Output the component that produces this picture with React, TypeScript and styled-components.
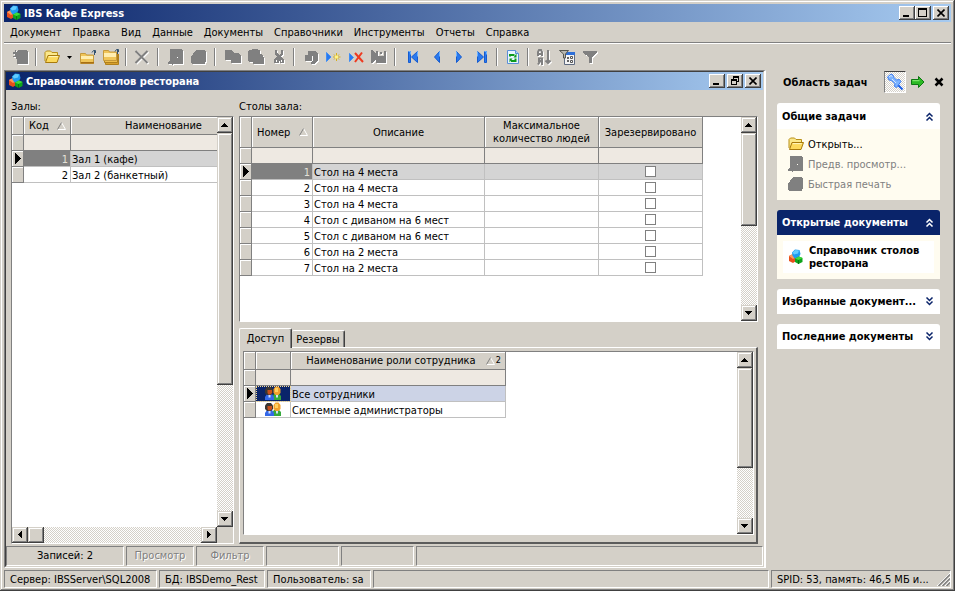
import React from 'react';
import styled, { createGlobalStyle, css } from 'styled-components';

const FACE = '#d4d0c8';
const SHADOW = '#808080';
const DARK = '#404040';
const NAVY = '#0a246a';

const Global = createGlobalStyle`
  * { box-sizing: border-box; }
  html, body { margin: 0; padding: 0; background: ${FACE}; }
  body, button, input, table {
    font-family: "DejaVu Sans Condensed", "DejaVu Sans", sans-serif;
    font-size: 11px;
    line-height: 13px;
    color: #000;
  }
  button { border: 0; padding: 0; margin: 0; background: none; }
  svg { display: block; flex: none; }
`;

/* ---------- window frame ---------- */

const raised = css`
  background: ${FACE};
  box-shadow: inset -1px -1px ${DARK}, inset 1px 1px ${FACE}, inset -2px -2px ${SHADOW}, inset 2px 2px #fff;
`;

const Window = styled.div`
  display: flex;
  flex-direction: column;
  width: 100%;
  height: 100vh;
  padding: 4px 4px 3px;
  overflow: hidden;
  ${raised}
`;

const TitleBar = styled.header`
  display: flex;
  align-items: center;
  flex: none;
  height: 18px;
  padding: 0 2px;
  background: linear-gradient(90deg, ${NAVY}, #a6caf0);
  color: #fff;
`;

const TitleText = styled.h1`
  flex: 1;
  margin: 0 0 0 2px;
  font-size: 11px;
  line-height: 13px;
  font-weight: bold;
  white-space: nowrap;
`;

const CaptionButton = styled.button<{ $gap?: boolean }>`
  display: flex;
  align-items: center;
  justify-content: center;
  width: 16px;
  height: 14px;
  margin-left: ${p => (p.$gap ? 2 : 0)}px;
  background: ${FACE};
  box-shadow: inset -1px -1px ${DARK}, inset 1px 1px #fff, inset -2px -2px ${SHADOW};
`;

const MenuBar = styled.nav`
  display: flex;
  align-items: center;
  flex: none;
  height: 22px;
  border-bottom: 1px solid #fff;
  box-shadow: inset 0 -1px ${SHADOW};
`;

const MenuItem = styled.button`
  height: 19px;
  padding: 0 5px 0 6px;
  white-space: nowrap;
`;

const ToolBar = styled.div`
  display: flex;
  align-items: center;
  flex: none;
  height: 26px;
  padding-left: 5px;
`;

const ToolButton = styled.button<{ $narrow?: boolean }>`
  display: flex;
  align-items: center;
  justify-content: center;
  width: ${p => (p.$narrow ? 13 : 23)}px;
  height: 22px;
  &:disabled svg { filter: drop-shadow(1px 1px 0 #fff); }
`;

const ToolSeparator = styled.span<{ $wide?: boolean }>`
  width: 2px;
  height: 18px;
  margin-left: ${p => (p.$wide ? 4 : 3)}px;
  margin-right: ${p => (p.$wide ? 5 : 3)}px;
  border-left: 1px solid ${SHADOW};
  border-right: 1px solid #fff;
`;

const Workspace = styled.div`
  display: flex;
  flex: 1;
  min-height: 0;
`;

/* ---------- child window ---------- */

const ChildFrame = styled.main`
  display: flex;
  flex: 1;
  min-width: 0;
  border-top: 1px solid ${SHADOW};
  border-left: 1px solid ${SHADOW};
  border-right: 2px solid #fff;
  border-bottom: 1px solid #fff;
`;

const ChildWindow = styled.section`
  display: flex;
  flex-direction: column;
  flex: 1;
  min-width: 0;
  border-top: 1px solid ${DARK};
  border-left: 1px solid ${DARK};
  border-right: 1px solid ${FACE};
  border-bottom: 1px solid ${FACE};
`;

const ChildBody = styled.div`
  display: flex;
  flex: 1;
  gap: 5px;
  min-height: 0;
  padding: 0 5px 1px;
`;

const HallColumn = styled.div`
  display: flex;
  flex-direction: column;
  flex: none;
  width: 223px;
`;

const TableColumn = styled.div`
  display: flex;
  flex-direction: column;
  flex: 1;
  min-width: 0;
`;

const Caption = styled.h2`
  flex: none;
  height: 26px;
  margin: 0;
  padding-top: 10px;
  font-size: 11px;
  line-height: 13px;
  font-weight: normal;
`;

/* ---------- grid ---------- */

const GridBox = styled.div<{ $height?: number }>`
  display: flex;
  flex: ${p => (p.$height ? `0 0 ${p.$height}px` : '1')};
  min-height: 0;
  background: #fff;
  border: 1px solid;
  border-color: ${SHADOW} #fff #fff ${SHADOW};
`;

const GridMain = styled.div`
  display: flex;
  flex-direction: column;
  flex: 1;
  min-width: 0;
`;

const GridView = styled.div`
  flex: 1;
  min-height: 0;
  overflow: hidden;
`;

const Table = styled.table<{ $width: number }>`
  width: ${p => p.$width}px;
  table-layout: fixed;
  border-collapse: separate;
  border-spacing: 0;
`;

const Col = styled.col<{ $width: number }>`
  width: ${p => p.$width}px;
`;

const HeadCell = styled.th<{ $height: number }>`
  height: ${p => p.$height}px;
  padding: 0 2px;
  background: ${FACE};
  border-right: 1px solid ${SHADOW};
  border-bottom: 1px solid ${SHADOW};
  box-shadow: inset 1px 1px #fff;
  font-weight: normal;
  text-align: center;
`;

const HeadSort = styled.span`
  display: flex;
  align-items: center;
  justify-content: space-between;
  padding: 0 2px 0 3px;
  white-space: nowrap;
`;

const SortMark = styled.span`
  display: flex;
  align-items: center;
  gap: 1px;
  font-size: 9px;
`;

const FilterCell = styled.td`
  height: 16px;
  padding: 0;
  background: #eee9e2;
  border-right: 1px solid ${SHADOW};
  border-bottom: 1px solid ${SHADOW};
`;

const FilterInput = styled.input`
  display: block;
  width: 100%;
  height: 15px;
  padding: 0 2px;
  border: 0;
  background: transparent;
`;

const Indicator = styled.td`
  height: 16px;
  padding: 0 0 0 3px;
  background: ${FACE};
  border-right: 1px solid ${SHADOW};
  border-bottom: 1px solid ${SHADOW};
  box-shadow: inset 1px 1px #fff;
`;

const Cell = styled.td<{ $align?: string; $tone?: string; $focus?: 'grey' | 'navy'; $plain?: boolean }>`
  height: 16px;
  padding: ${p => (p.$plain ? 0 : 2)}px 2px 0 1px;
  line-height: 13px;
  border-right: 1px solid #c0c0c0;
  border-bottom: 1px solid #c0c0c0;
  text-align: ${p => p.$align || 'left'};
  white-space: nowrap;
  background: ${p => p.$tone || '#fff'};
  ${p => p.$focus === 'grey' && css`background: ${SHADOW}; color: #e4e0d8;`}
  ${p => p.$focus === 'navy' && css`background: ${NAVY}; outline: 1px dotted #f5db95; outline-offset: -1px;`}
  & > svg { margin: 0 auto; }
`;

const Check = styled.input`
  appearance: none;
  display: block;
  width: 11px;
  height: 11px;
  margin: 0 auto;
  background: #fff;
  border: 1px solid ${SHADOW};
`;

/* ---------- scroll bars ---------- */

const Scroll = styled.div<{ $across?: boolean }>`
  display: flex;
  flex: none;
  flex-direction: ${p => (p.$across ? 'row' : 'column')};
  ${p => (p.$across ? 'height: 16px;' : 'width: 16px;')}
  background: repeating-conic-gradient(${FACE} 0 25%, #fff 0 50%) 0 0 / 2px 2px;
  ${p => !p.$across && 'flex: 1;'}
`;

const ScrollSide = styled.div`
  display: flex;
  flex-direction: column;
  flex: none;
  width: 16px;
`;

const ScrollArrow = styled.button`
  display: flex;
  align-items: center;
  justify-content: center;
  flex: none;
  width: 16px;
  height: 16px;
  padding: 0 1px 1px 0;
  ${raised}
`;

const Thumb = styled.div<{ $length: number }>`
  flex: 0 1 ${p => p.$length}px;
  ${raised}
`;

const ScrollGap = styled.div`
  flex: 1;
`;

const Corner = styled.div`
  height: 16px;
  background: ${FACE};
`;

/* ---------- tabs ---------- */

const TabStrip = styled.div`
  display: flex;
  align-items: flex-end;
  flex: none;
  height: 19px;
  margin-top: 6px;
`;

const Tab = styled.button<{ $active?: boolean }>`
  position: relative;
  z-index: ${p => (p.$active ? 1 : 0)};
  width: ${p => (p.$active ? 53 : 53)}px;
  height: ${p => (p.$active ? 20 : 17)}px;
  margin-bottom: ${p => (p.$active ? -1 : 0)}px;
  background: ${FACE};
  border-top: 1px solid #fff;
  border-left: ${p => (p.$active ? '1px solid #fff' : '0')};
  border-right: 1px solid ${DARK};
  border-radius: 2px 2px 0 0;
  box-shadow: inset -1px 0 ${SHADOW};
`;

const TabPage = styled.div`
  display: flex;
  flex: 1;
  min-height: 0;
  padding: 3px 2px 7px 3px;
  border: 1px solid;
  border-color: #fff ${DARK} ${DARK} #fff;
  border-right-width: 2px;
  border-bottom-width: 2px;
  border-right-color: #5c5c5c;
  border-bottom-color: #5c5c5c;
`;

/* ---------- status bars ---------- */

const StatusBar = styled.footer<{ $inner?: boolean }>`
  display: flex;
  flex: none;
  gap: 2px;
  height: ${p => (p.$inner ? 20 : 18)}px;
  margin-top: ${p => (p.$inner ? 1 : 2)}px;
`;

const StatusPanel = styled.div<{ $width?: number; $center?: boolean }>`
  display: flex;
  align-items: center;
  justify-content: ${p => (p.$center ? 'center' : 'space-between')};
  flex: ${p => (p.$width ? `0 0 ${p.$width}px` : '1')};
  min-width: 0;
  padding: ${p => (p.$center ? '0 0 2px' : '0 0 0 5px')};
  overflow: hidden;
  white-space: nowrap;
  border: 1px solid;
  border-color: ${SHADOW} #fff #fff ${SHADOW};
`;

const StatusButton = styled.button`
  &:disabled { color: ${SHADOW}; text-shadow: 1px 1px #fff; }
`;

/* ---------- task pane ---------- */

const TaskPane = styled.aside`
  flex: none;
  width: 185px;
  padding: 1px 11px 0;
`;

const PaneTop = styled.div`
  display: flex;
  align-items: center;
  height: 22px;
  margin-bottom: 10px;
  padding-left: 6px;
`;

const PaneTitle = styled.h2`
  flex: 1;
  margin: 0;
  font-size: 11px;
  line-height: 13px;
  white-space: nowrap;
`;

const PinButton = styled.button`
  display: flex;
  align-items: center;
  justify-content: center;
  width: 22px;
  height: 22px;
  border: 1px solid;
  border-color: ${DARK} #fff #fff ${SHADOW};
  background: repeating-conic-gradient(${FACE} 0 25%, #fff 0 50%) 0 0 / 2px 2px;
`;

const PaneButton = styled.button<{ $close?: boolean }>`
  display: flex;
  width: ${p => (p.$close ? 10 : 16)}px;
  margin-left: ${p => (p.$close ? 8 : 4)}px;
  margin-right: ${p => (p.$close ? -4 : 0)}px;
`;

const Group = styled.section`
  margin-bottom: 10px;
`;

const GroupHead = styled.button<{ $dark?: boolean; $tall?: boolean }>`
  display: flex;
  align-items: center;
  justify-content: space-between;
  width: 100%;
  height: ${p => (p.$tall ? 26 : 25)}px;
  padding: 0 6px 0 5px;
  border-radius: 3px 3px 0 0;
  background: ${p => (p.$dark ? NAVY : '#fff')};
  color: ${p => (p.$dark ? '#fff' : NAVY)};
  white-space: nowrap;
`;

const GroupTitle = styled.span<{ $dark?: boolean }>`
  font-weight: bold;
  color: ${p => (p.$dark ? '#fff' : '#000')};
`;

const TaskList = styled.div`
  padding: 5px 11px 6px;
  background: #fffcf0;
`;

const TaskItem = styled.button`
  display: flex;
  align-items: center;
  gap: 4px;
  width: 100%;
  height: 20px;
  white-space: nowrap;
  &:disabled { color: ${SHADOW}; }
`;

const OpenDocs = styled.div`
  padding: 6px;
  background: #fffcf0;
`;

const OpenDoc = styled.button`
  display: flex;
  align-items: center;
  gap: 5px;
  width: 100%;
  height: 32px;
  padding-left: 5px;
  background: #fff;
  font-weight: bold;
  text-align: left;
  white-space: nowrap;
`;

/* ---------- icons ---------- */

const Logo = () => (
  <svg width="16" height="16" viewBox="0 0 16 16">
    <path d="M1 7l4-2 3 3v4l-3 2-4-2z" fill="#e8501c" />
    <path d="M1 7l4-2 3 3-3 2z" fill="#ff9a5a" />
    <path d="M4 3.500l3-3L11.500 1l1 4-2 4-4 .5-2-3z" fill="#1d9bf0" />
    <path d="M4.500 3.500l3-2.500 3.500.5-1 3-4 1z" fill="#63ccff" />
    <path d="M7 9.500l4-2 3.500 1.500V13l-4 2-3.500-2z" fill="#0ea41c" />
    <path d="M7 9.500l4-2 3.500 1.500-4 2z" fill="#3ddb3c" />
    <path d="M10.500 11v4" stroke="#087512" />
  </svg>
);

const Folder = () => (
  <svg width="16" height="16" viewBox="0 0 16 16">
    <path d="M1 12V3.500L2.500 2h4L8 3.500h5.500V7" fill="#fbe88c" stroke="#b98f16" />
    <path d="M1.500 13.500L4 6.500h11.500L13 13.500z" fill="#fcd95c" stroke="#a87a0c" />
    <path d="M4.800 7.600h9" stroke="#fff6c0" />
  </svg>
);

const FolderUp = () => (
  <svg width="16" height="16" viewBox="0 0 16 16">
    <path d="M.5 14.500V4.500h5l1 1.500h7v8.500z" fill="#f0c558" stroke="#c69a3c" />
    <path d="M1 7h12v3H1z" fill="#ffeeb0" />
    <path d="M1 13h13v1.500H1z" fill="#a86f14" />
    <path d="M14.500 6V2M12 3.500L13.500 1.500H15.500V4" fill="none" stroke="#31506e" />
  </svg>
);

const FoldersUp = () => (
  <svg width="16" height="16" viewBox="0 0 16 16">
    <path d="M2.500 12.500v3h13V5" fill="#d8a02c" stroke="#b0801c" />
    <path d="M1.500 10v3.500h13V4" fill="#edbd4c" stroke="#b0801c" />
    <path d="M.5 11.500v-10h5l1 1.500h7v8.500z" fill="#f0c558" stroke="#c69a3c" />
    <path d="M1 4h12v4H1z" fill="#ffeeb0" />
    <path d="M14.500 5V1M12 2.500L13.500.5H15.500V3" fill="none" stroke="#31506e" />
  </svg>
);

const Grey = ({ d, line }: { d?: string; line?: string }) => (
  <svg width="16" height="16" viewBox="0 0 16 16">
    {d && <path d={d} fill={SHADOW} fillRule="evenodd" shapeRendering="crispEdges" />}
    {line && <path d={line} fill="none" stroke={SHADOW} strokeWidth="2" />}
  </svg>
);

const SHAPES = {
  fresh: 'M5 1h9l1 2v12H4v-5H3V8H0V7h2V5H0V3h2V1h1v2h1z',
  preview: 'M2 0h11l2 2v13H5l-1 1-1-1H0v-2h1l1-2zM9 8v1h1V8z',
  print: 'M5 1h9v1h1v11h-1v2H1l-1-1V8l2-3z',
  copy: 'M0 1h7l2 3h4l3 3v7H6v-3H0z',
  paste: 'M1 1h2l1-1h5l1 1h2v4h2l2 4v6H5v-2H1l-1-1V2z',
  cut: 'M4 1h2v3l2 2 2-2V1h2v4l-2 3 3 2v4H9v-2H8v2H3v-4l3-2-2-3zM5 11v2h1v-2zM10 11v2h1v-2z',
  undo: 'M6 2h8l2 3v6l-4 4H9v-2l2-2V7h-1v5H3V6h3z',
  post: 'M0 1h1l4 4V2h2v5h6V2h2v12H5v-3l-4 3H0zM9 3h2v2H9z',
  funnel: 'M1 2h14v2l-5 4v6H7V8L1 4z',
};

const BlueShape = ({ d }: { d: string }) => (
  <svg width="16" height="16" viewBox="0 0 16 16">
    <path d={d} fill="#2a79ee" stroke="#155bd0" />
    <path d={d} fill="none" stroke="#6cb3ff" strokeDasharray="5 30" />
  </svg>
);

const InsertRow = () => (
  <svg width="16" height="16" viewBox="0 0 16 16">
    <path d="M1.500 3.500v9L6 8z" fill="#2a79ee" stroke="#3f8df5" />
    <path d="M11.500 4v8M8 8h7.500M9 5.500l5 5M14 5.500l-5 5" stroke="#d9b018" />
    <path d="M10 6.500h3v3h-3z" fill="#fff48a" />
  </svg>
);

const DeleteRow = () => (
  <svg width="16" height="16" viewBox="0 0 16 16">
    <path d="M1.500 4.500v8L5.500 8.500z" fill="#2a79ee" stroke="#3f8df5" />
    <path d="M7 4l8 9M14 3.500l-7 9.500" stroke="#ee3a20" strokeWidth="2" />
  </svg>
);

const Refresh = () => (
  <svg width="16" height="16" viewBox="0 0 16 16">
    <path d="M2.500 1.500h8l3 3v10h-11z" fill="#e9f4ff" stroke="#5b8fd6" />
    <path d="M10.500 1.500v3h3" fill="#b6d4f8" stroke="#5b8fd6" />
    <path d="M5 7.500V6h4.500M10.500 9.500V12H6" fill="none" stroke="#0c9a1c" strokeWidth="2" />
    <path d="M8.500 8.500h3v-4zM7.500 9.500h-3v4z" fill="#0c9a1c" />
  </svg>
);

const SortIcon = () => (
  <svg width="16" height="16" viewBox="0 0 16 16" fill="none" stroke={SHADOW} strokeWidth="2">
    <path d="M2 7V3l1-2h2l1 2v4M2 5h4M6 16V9.500H3V12h3M4 12.500L2 15.500" />
    <path d="M12 1v13M9.500 11.500L12 14l2.500-2.500" />
  </svg>
);

const FilterForm = () => (
  <svg width="16" height="16" viewBox="0 0 16 16">
    <path d="M5.500 3.500h10v12h-10z" fill="#f4f4f4" stroke="#5f6b80" />
    <path d="M6 3h10v3H6z" fill="#2d6fd8" />
    <path d="M8 9h2M8 12h2" stroke="#333" strokeWidth="1.500" />
    <path d="M11.500 7.500h2v2h-2zM11.500 11.500h2v2h-2z" fill="#fff" stroke="#555" />
    <path d="M.5 1.500h9L6.500 5v4h-2V5z" fill="#b8b8b0" stroke="#55554f" />
  </svg>
);

const Pin = () => (
  <svg width="18" height="18" viewBox="0 0 18 18">
    <path d="M11 11l5.500 5.500" stroke="#1b5fe8" strokeWidth="2" />
    <path d="M1.500 4L5 1l2 1 .5 2 3 3 3-.5 1.500 2-4.500 6-2-1 .5-3-3.500-3-2.500-.5z" fill="#7db4ff" stroke="#3f7ef0" />
    <path d="M3 4l2-1.500 1.500 1M6 6l4 4" stroke="#d8eaff" fill="none" />
  </svg>
);

const GreenArrow = () => (
  <svg width="16" height="14" viewBox="0 0 16 14">
    <path d="M1.500 4.500h7v-3l5.500 5.500-5.500 5.500v-3h-7z" fill="#2cba24" stroke="#0c7812" />
    <path d="M2.500 5.700h7" stroke="#8df07a" />
  </svg>
);

const People = () => (
  <svg width="18" height="15" viewBox="0 0 18 15">
    <path d="M8 14v-3l2-3h5l2 2v4z" fill="#35a93c" />
    <path d="M9.500 3l2-2.500h3l2 2.500v4l-2 2h-3l-2-2z" fill="#f2a02c" />
    <path d="M11 2h3v4h-3z" fill="#ffd060" />
    <path d="M1 14v-3l2-3h5l2 3v3z" fill="#3468e8" />
    <path d="M1 3.500L3 1h4l2 2.500V7L7 9H3L1 7z" fill="#3b3632" />
    <path d="M3.500 4H8v3L6.500 8.500h-2L3.500 7z" fill="#c8501c" />
    <path d="M4.500 9h2v2.500h-2zM12 9h2v2.500h-2z" fill="#cfe0ff" />
  </svg>
);

const Tri = ({ dir }: { dir: 'up' | 'down' | 'left' | 'right' }) => {
  const paths = {
    up: 'M3 0h1v1h1v1h1v1h1v1H0V3h1V2h1V1h1z',
    down: 'M0 0h7v1H6v1H5v1H4v1H3V3H2V2H1V1H0z',
    left: 'M3 0h1v7H3V6H2V5H1V4H0V3h1V2h1V1h1z',
    right: 'M0 0h1v1h1v1h1v1h1v1H3v1H2v1H1v1H0z',
  };
  const flat = dir === 'up' || dir === 'down';
  return (
    <svg width={flat ? 7 : 4} height={flat ? 4 : 7} shapeRendering="crispEdges">
      <path d={paths[dir]} />
    </svg>
  );
};

const RowMark = () => (
  <svg width="6" height="11" viewBox="0 0 6 11" shapeRendering="crispEdges">
    <path d="M0 0l6 5.500L0 11z" />
  </svg>
);

const SortTriangle = () => (
  <svg width="9" height="8" viewBox="0 0 9 8">
    <path d="M4.500.5l4 7h-8" fill="none" stroke="#fff" />
    <path d="M.5 7.500L4.500.5" stroke={SHADOW} />
  </svg>
);

const Chevrons = ({ down }: { down?: boolean }) => (
  <svg width="9" height="9" viewBox="0 0 9 9" fill="none" stroke="currentColor" strokeWidth="1.500">
    <path d={down ? 'M1.500 .5l3 3 3-3M1.500 4.500l3 3 3-3' : 'M1.500 4.500l3-3 3 3M1.500 8.500l3-3 3 3'} />
  </svg>
);

const Cross = () => (
  <svg width="10" height="10" viewBox="0 0 10 10">
    <path d="M1.500 1.500l7 7M8.500 1.500l-7 7" stroke="#000" strokeWidth="2.500" />
  </svg>
);

const CaptionGlyph = ({ kind }: { kind: 'min' | 'max' | 'restore' | 'close' }) => {
  if (kind === 'close') {
    return (
      <svg width="8" height="8" viewBox="0 0 8 8">
        <path d="M.5.5l7 7M7.500.5l-7 7" stroke="#000" strokeWidth="1.600" />
      </svg>
    );
  }
  return (
    <svg width="10" height="10" viewBox="0 0 10 10" shapeRendering="crispEdges">
      {kind === 'min' && <path d="M1 7h6v2H1z" />}
      {kind === 'max' && <path fillRule="evenodd" d="M0 0h9v9H0zM1 2v6h7V2z" />}
      {kind === 'restore' && (
        <path fillRule="evenodd" d="M3 0h6v6H7V5h1V2H4v1H3zM1 3h6v6H1zM2 5v3h4V5z" />
      )}
    </svg>
  );
};

const Grip = () => (
  <svg width="13" height="13" viewBox="0 0 13 13">
    <path d="M0 13L13 0M4 13l9-9M8 13l5-5" stroke="#fff" />
    <path d="M1.500 13L13 1.500M5.500 13L13 5.500M9.500 13L13 9.500" stroke={SHADOW} strokeWidth="1.500" />
  </svg>
);

/* ---------- composed parts ---------- */

const VScroll = ({ thumb, corner }: { thumb: number; corner?: boolean }) => (
  <ScrollSide>
    <Scroll>
      <ScrollArrow aria-label="Вверх"><Tri dir="up" /></ScrollArrow>
      <Thumb $length={thumb} />
      <ScrollGap />
      <ScrollArrow aria-label="Вниз"><Tri dir="down" /></ScrollArrow>
    </Scroll>
    {corner && <Corner />}
  </ScrollSide>
);

const Caps = ({ child }: { child?: boolean }) => (
  <>
    <CaptionButton aria-label="Свернуть"><CaptionGlyph kind="min" /></CaptionButton>
    <CaptionButton aria-label="Развернуть" $gap={child}>
      <CaptionGlyph kind={child ? 'restore' : 'max'} />
    </CaptionButton>
    <CaptionButton aria-label="Закрыть" $gap><CaptionGlyph kind="close" /></CaptionButton>
  </>
);

const FilterRow = ({ names }: { names: string[] }) => (
  <tr>
    <Indicator />
    {names.map(n => (
      <FilterCell key={n}><FilterInput aria-label={`Фильтр: ${n}`} /></FilterCell>
    ))}
  </tr>
);

const menus = ['Документ', 'Правка', 'Вид', 'Данные', 'Документы', 'Справочники', 'Инструменты', 'Отчеты', 'Справка'];

type Tool = { label: string; icon: React.ReactNode; off?: boolean; narrow?: boolean };
const tools: (Tool | 'sep' | 'wide')[] = [
  { label: 'Создать', icon: <Grey d={SHAPES.fresh} />, off: true },
  'sep',
  { label: 'Открыть', icon: <Folder /> },
  { label: 'Список', icon: <svg width="5" height="3"><path d="M0 0h5L2.500 3z" /></svg>, narrow: true },
  { label: 'Загрузить', icon: <FolderUp /> },
  { label: 'Загрузить все', icon: <FoldersUp /> },
  'sep',
  { label: 'Удалить', icon: <Grey line="M1.500 2l12 12M13.500 2l-12 12" />, off: true },
  'wide',
  { label: 'Предварительный просмотр', icon: <Grey d={SHAPES.preview} />, off: true },
  { label: 'Печать', icon: <Grey d={SHAPES.print} />, off: true },
  'wide',
  { label: 'Копировать', icon: <Grey d={SHAPES.copy} />, off: true },
  { label: 'Вставить', icon: <Grey d={SHAPES.paste} />, off: true },
  { label: 'Вырезать', icon: <Grey d={SHAPES.cut} />, off: true },
  'sep',
  { label: 'Отменить', icon: <Grey d={SHAPES.undo} />, off: true },
  { label: 'Добавить строку', icon: <InsertRow /> },
  { label: 'Удалить строку', icon: <DeleteRow /> },
  { label: 'Сохранить строку', icon: <Grey d={SHAPES.post} />, off: true },
  'wide',
  { label: 'Первая', icon: <BlueShape d="M3.500 2.500h2v11h-2zM12.500 2.500v11L6.500 8z" /> },
  { label: 'Предыдущая', icon: <BlueShape d="M11.500 2.500v11L6.500 8z" /> },
  { label: 'Следующая', icon: <BlueShape d="M5.500 2.500v11l5-5.500z" /> },
  { label: 'Последняя', icon: <BlueShape d="M3.500 2.500v11l6-5.500zM10.500 2.500h2v11h-2z" /> },
  'sep',
  { label: 'Обновить', icon: <Refresh /> },
  'sep',
  { label: 'Сортировка', icon: <SortIcon />, off: true },
  { label: 'Настройка фильтра', icon: <FilterForm /> },
  { label: 'Снять фильтр', icon: <Grey d={SHAPES.funnel} />, off: true },
];

const halls = ['Зал 1 (кафе)', 'Зал 2 (банкетный)'];
const places = [
  'Стол на 4 места',
  'Стол на 4 места',
  'Стол на 4 места',
  'Стол с диваном на 6 мест',
  'Стол с диваном на 6 мест',
  'Стол на 2 места',
  'Стол на 2 места',
];
const roles = ['Все сотрудники', 'Системные администраторы'];

const HallsGrid = () => (
  <GridBox>
    <GridMain>
      <GridView>
        <Table $width={245} aria-label="Залы">
          <colgroup><Col $width={12} /><Col $width={47} /><Col $width={186} /></colgroup>
          <thead>
            <tr>
              <HeadCell $height={18} />
              <HeadCell $height={18}><HeadSort>Код <SortTriangle /></HeadSort></HeadCell>
              <HeadCell $height={18}>Наименование</HeadCell>
            </tr>
          </thead>
          <tbody>
            <FilterRow names={['Код', 'Наименование']} />
            {halls.map((h, i) => (
              <tr key={h}>
                <Indicator>{i === 0 && <RowMark />}</Indicator>
                <Cell $align="right" $focus={i === 0 ? 'grey' : undefined}>{i + 1}</Cell>
                <Cell $tone={i === 0 ? '#d4d4d4' : undefined}>{h}</Cell>
              </tr>
            ))}
          </tbody>
        </Table>
      </GridView>
      <Scroll $across>
        <ScrollArrow aria-label="Влево"><Tri dir="left" /></ScrollArrow>
        <Thumb $length={16} />
        <ScrollGap />
        <ScrollArrow aria-label="Вправо"><Tri dir="right" /></ScrollArrow>
      </Scroll>
    </GridMain>
    <VScroll thumb={252} corner />
  </GridBox>
);

const PlacesGrid = () => (
  <GridBox $height={206}>
    <GridView>
      <Table $width={463} aria-label="Столы зала">
        <colgroup>
          <Col $width={12} /><Col $width={61} /><Col $width={172} /><Col $width={114} /><Col $width={104} />
        </colgroup>
        <thead>
          <tr>
            <HeadCell $height={31} />
            <HeadCell $height={31}><HeadSort>Номер <SortTriangle /></HeadSort></HeadCell>
            <HeadCell $height={31}>Описание</HeadCell>
            <HeadCell $height={31}>Максимальное<br />количество людей</HeadCell>
            <HeadCell $height={31}>Зарезервировано</HeadCell>
          </tr>
        </thead>
        <tbody>
          <FilterRow names={['Номер', 'Описание', 'Максимальное количество людей', 'Зарезервировано']} />
          {places.map((p, i) => {
            const tone = i === 0 ? '#d4d4d4' : undefined;
            return (
              <tr key={i}>
                <Indicator>{i === 0 && <RowMark />}</Indicator>
                <Cell $align="right" $focus={i === 0 ? 'grey' : undefined}>{i + 1}</Cell>
                <Cell $tone={tone}>{p}</Cell>
                <Cell $tone={tone} />
                <Cell $tone={tone} $plain><Check type="checkbox" aria-label={`Зарезервировано: ${i + 1}`} /></Cell>
              </tr>
            );
          })}
        </tbody>
      </Table>
    </GridView>
    <VScroll thumb={93} />
  </GridBox>
);

const RolesGrid = () => (
  <GridBox>
    <GridView>
      <Table $width={262} aria-label="Роли сотрудников">
        <colgroup><Col $width={12} /><Col $width={35} /><Col $width={215} /></colgroup>
        <thead>
          <tr>
            <HeadCell $height={18} />
            <HeadCell $height={18} />
            <HeadCell $height={18}>
              <HeadSort>
                <span />
                Наименование роли сотрудника
                <SortMark><SortTriangle />2</SortMark>
              </HeadSort>
            </HeadCell>
          </tr>
        </thead>
        <tbody>
          <FilterRow names={['Значок', 'Наименование роли сотрудника']} />
          {roles.map((r, i) => (
            <tr key={r}>
              <Indicator>{i === 0 && <RowMark />}</Indicator>
              <Cell $plain $focus={i === 0 ? 'navy' : undefined}><People /></Cell>
              <Cell $tone={i === 0 ? '#ccd3e6' : undefined}>{r}</Cell>
            </tr>
          ))}
        </tbody>
      </Table>
    </GridView>
    <VScroll thumb={100} />
  </GridBox>
);

export default function App() {
  return (
    <>
      <Global />
      <Window>
        <TitleBar>
          <Logo />
          <TitleText>IBS Кафе Express</TitleText>
          <Caps />
        </TitleBar>
        <MenuBar>
          {menus.map(m => <MenuItem key={m}>{m}</MenuItem>)}
        </MenuBar>
        <ToolBar role="toolbar">
          {tools.map((t, i) =>
            typeof t === 'string' ? (
              <ToolSeparator key={i} $wide={t === 'wide'} />
            ) : (
              <ToolButton key={i} aria-label={t.label} disabled={t.off} $narrow={t.narrow}>{t.icon}</ToolButton>
            ),
          )}
        </ToolBar>
        <Workspace>
          <ChildFrame>
            <ChildWindow>
              <TitleBar>
                <Logo />
                <TitleText>Справочник столов ресторана</TitleText>
                <Caps child />
              </TitleBar>
              <ChildBody>
                <HallColumn>
                  <Caption>Залы:</Caption>
                  <HallsGrid />
                </HallColumn>
                <TableColumn>
                  <Caption>Столы зала:</Caption>
                  <PlacesGrid />
                  <TabStrip role="tablist">
                    <Tab role="tab" aria-selected="true" $active>Доступ</Tab>
                    <Tab role="tab" aria-selected="false">Резервы</Tab>
                  </TabStrip>
                  <TabPage role="tabpanel">
                    <RolesGrid />
                  </TabPage>
                </TableColumn>
              </ChildBody>
              <StatusBar $inner>
                <StatusPanel $width={118} $center>Записей: 2</StatusPanel>
                <StatusPanel $width={68} $center><StatusButton disabled>Просмотр</StatusButton></StatusPanel>
                <StatusPanel $width={68} $center><StatusButton disabled>Фильтр</StatusButton></StatusPanel>
                <StatusPanel $width={73} />
                <StatusPanel $width={73} />
                <StatusPanel />
              </StatusBar>
            </ChildWindow>
          </ChildFrame>
          <TaskPane>
            <PaneTop>
              <PaneTitle>Область задач</PaneTitle>
              <PinButton aria-label="Закрепить"><Pin /></PinButton>
              <PaneButton aria-label="Вперед"><GreenArrow /></PaneButton>
              <PaneButton aria-label="Закрыть область" $close><Cross /></PaneButton>
            </PaneTop>
            <Group>
              <GroupHead $tall><GroupTitle>Общие задачи</GroupTitle><Chevrons /></GroupHead>
              <TaskList>
                <TaskItem><Folder />Открыть...</TaskItem>
                <TaskItem disabled><Grey d={SHAPES.preview} />Предв. просмотр...</TaskItem>
                <TaskItem disabled><Grey d={SHAPES.print} />Быстрая печать</TaskItem>
              </TaskList>
            </Group>
            <Group>
              <GroupHead $dark><GroupTitle $dark>Открытые документы</GroupTitle><Chevrons /></GroupHead>
              <OpenDocs>
                <OpenDoc><Logo /><span>Справочник столов<br />ресторана</span></OpenDoc>
              </OpenDocs>
            </Group>
            <Group>
              <GroupHead><GroupTitle>Избранные документ...</GroupTitle><Chevrons down /></GroupHead>
            </Group>
            <Group>
              <GroupHead><GroupTitle>Последние документы</GroupTitle><Chevrons down /></GroupHead>
            </Group>
          </TaskPane>
        </Workspace>
        <StatusBar>
          <StatusPanel $width={153}>Сервер: IBSServer\SQL2008</StatusPanel>
          <StatusPanel $width={106}>БД: IBSDemo_Rest</StatusPanel>
          <StatusPanel $width={104}>Пользователь: sa</StatusPanel>
          <StatusPanel />
          <StatusPanel $width={180}>SPID: 53, память: 46,5 МБ и...<Grip /></StatusPanel>
        </StatusBar>
      </Window>
    </>
  );
}
